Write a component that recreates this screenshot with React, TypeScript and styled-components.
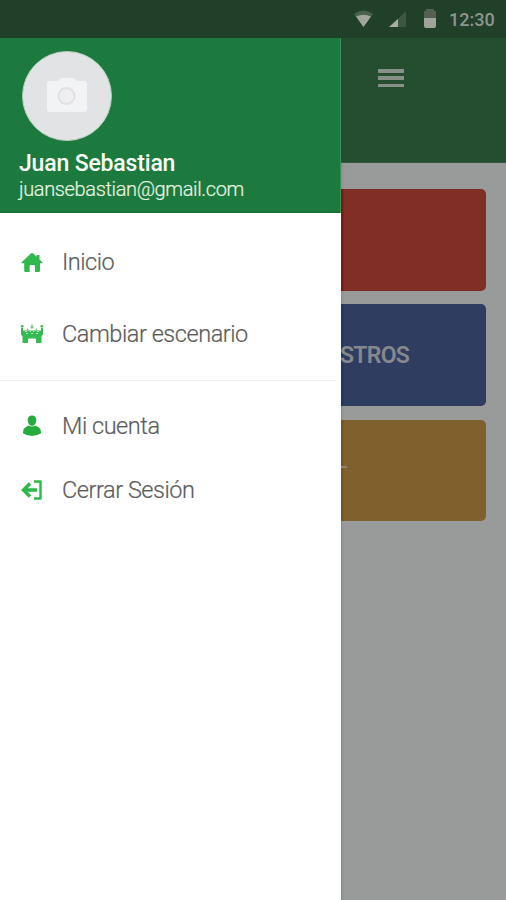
import React from "react";
import styled, { createGlobalStyle } from "styled-components";

const GlobalStyle = createGlobalStyle`
  * { box-sizing: border-box; }
  body { margin: 0; font-family: Roboto, "Liberation Sans", sans-serif; }
`;

const Screen = styled.div`
  width: 506px;
  height: 900px;
  display: flex;
  flex-direction: column;
  overflow: hidden;
  background: #989b99;
`;

const StatusBar = styled.header`
  height: 38px;
  flex: none;
  display: flex;
  align-items: center;
  justify-content: flex-end;
  padding-right: 11px;
  background: #204029;
`;

const StatusIcons = styled.svg`
  width: 90px;
  height: 22px;
  margin-right: 7px;
`;

const Clock = styled.time`
  width: 46px;
  font-size: 18px;
  line-height: 22px;
  font-weight: 500;
  letter-spacing: 0;
  padding-top: 1px;
  white-space: nowrap;
  color: #8f9690;
`;

const Body = styled.div`
  flex: 1;
  display: flex;
  min-height: 0;
`;

const Drawer = styled.aside`
  width: 341px;
  flex: none;
  background: #fff;
`;

const Profile = styled.section`
  height: 175px;
  padding: 13px 19px 0;
  background: linear-gradient(#1d7a3e 172px, #127032);
  border-right: 1px solid #3c9259;
`;

const Avatar = styled.div`
  width: 90px;
  height: 90px;
  margin-left: 3px;
  display: flex;
  align-items: center;
  justify-content: center;
  border-radius: 50%;
  background: #e2e3e5;
  border: 1px solid #b5cfbd;
`;

const Name = styled.div`
  margin-top: 9px;
  font-size: 23px;
  line-height: 27px;
  font-weight: 500;
  letter-spacing: -0.17px;
  white-space: nowrap;
  color: #fbfff8;
`;

const Email = styled.div`
  font-size: 20px;
  line-height: 25px;
  font-weight: 300;
  letter-spacing: -0.36px;
  white-space: nowrap;
  color: #e6f4e0;
  -webkit-text-stroke: 0.2px #e6f4e0;
`;

const Menu = styled.nav`
  padding-top: 13px;
`;

const MenuItem = styled.a<{ $height: number }>`
  height: ${(p) => p.$height}px;
  display: flex;
  align-items: center;
  gap: 18px;
  padding-left: 20px;
  font-size: 23.5px;
  font-weight: 300;
  color: #5c5c5c;
  -webkit-text-stroke: 0.2px #5c5c5c;
  white-space: nowrap;

  svg { width: 24px; height: 24px; flex: none; }
`;

const Label = styled.span`
  letter-spacing: -0.45px;
`;

const Divider = styled.hr`
  height: 1px;
  margin: 10px 5px 13px 0;
  border: 0;
  background: #f0f0f0;
`;

const Page = styled.main`
  flex: 1;
  min-width: 0;
  border-left: 1px solid #8a8d8b;
  background: linear-gradient(90deg, #929593, #989b99 3px);
`;

const AppBar = styled.div`
  height: 125px;
  margin-left: -1px;
  padding: 31px 0 0 37px;
  background: #244e2f;
  border-bottom: 1px solid #345b3e;
`;

const MenuButton = styled.button`
  width: 26px;
  height: 18px;
  display: flex;
  flex-direction: column;
  justify-content: space-between;
  padding: 0;
  border: 0;
  background: none;
`;

const Bar = styled.span`
  height: 3.5px;
  background: #868f88;
`;

const Cards = styled.div`
  display: grid;
  grid-template-rows: repeat(3, 102px);
  row-gap: 13px;
  margin-left: -1px;
  padding: 26px 20px 0 0;
`;

const Card = styled.div<{ $color: string; $edge: string }>`
  display: flex;
  align-items: center;
  overflow: hidden;
  border-radius: 0 5px 5px 0;
  background: linear-gradient(90deg, ${(p) => p.$edge} 2px, ${(p) => p.$color} 3px);

  &:last-child { margin-top: 1px; }
`;

const CardText = styled.span`
  margin-left: -1px;
  font-size: 23px;
  font-weight: 600;
  letter-spacing: -0.7px;
  color: #85888d;
`;

const CardMark = styled.span`
  width: 6px;
  height: 1.5px;
  margin-top: -7px;
  background: #91856e;
`;

const CameraIcon = () => (
  <svg width="40" height="37" viewBox="0 0 40 37">
    <path d="M3 3h8l4-4h11l4 4h7q3 0 3 3v25q0 3-3 3H3q-3 0-3-3V6q0-3 3-3z" fill="#f2f3f4" />
    <circle cx="19.500" cy="18" r="8" fill="#efeff1" stroke="#dfe0e2" strokeWidth="2" />
  </svg>
);

const HomeIcon = () => (
  <svg viewBox="0 0 24 24" fill="#31b84e">
    <path d="M10.500 3.800q1.500-1.400 3 0l3.200 3V5h2.800v4.400l2.900 2.900q.7.900-.7 1H20v7.400q0 1.200-1.200 1.200h-3.900v-5.500q0-1.300-1.200-1.300h-2.900q-1.200 0-1.200 1.300v5.500H5.500q-1.300 0-1.300-1.200v-7.400H2.100q-1.100-.2-.4-1z" />
  </svg>
);

const CastleIcon = () => (
  <svg viewBox="0 0 24 24">
    <path d="M1 6h2v2.500h18V6h2v6.500l-1.500 2V21H16v-3.500q0-1-1-1H9q-1 0-1 1V21H2.500v-6.500L1 12.500z" fill="#35ba53" />
    <circle cx="2.200" cy="4.300" r="1.400" fill="#45bc5d" />
    <circle cx="21.800" cy="4.300" r="1.400" fill="#45bc5d" />
    <path d="M12 2.500v4M10.500 5.500h3M7.500 6.500v2M16.500 6.500v2" stroke="#78c585" strokeWidth="1.500" />
    <path d="M5 9.500h2m3 0h1m2 0h1m3 0h2M6 11.500h2m3 0h2m3 0h2" stroke="#b4e3bd" strokeWidth="1.200" />
  </svg>
);

const UserIcon = () => (
  <svg viewBox="0 0 24 24" fill="#26ac3d">
    <path d="M12 1.500c3 0 4.500 2 4.300 5-.2 3-1.700 5.300-4.300 5.300S7.900 9.500 7.700 6.500C7.500 3.500 9 1.500 12 1.500z" />
    <path d="M8.500 11.500q3.500 2 7 0l3 1.700Q21 14.500 21 18v1.300Q17 22 12 22T3 19.300V18q0-3.500 2.500-4.800z" />
  </svg>
);

const LogoutIcon = () => (
  <svg viewBox="0 0 24 24" fill="none" stroke="#2eb849">
    <path d="M10 5.500 3.500 12l6.500 6.500M3.500 12H17" strokeWidth="3.500" />
    <path d="M14 3.500h6.500v17H14" strokeWidth="2.400" strokeLinejoin="round" />
  </svg>
);

const PhoneStatus = () => (
  <StatusIcons viewBox="352 7 90 22">
    <path d="M354 13q9.500-7 19 0l-9.500 13z" fill="#49614f" />
    <path d="M356 15.500q7.500-3.500 15 0l-7.500 10.500z" fill="#a0a69e" />
    <path d="M406 10v16h-17z" fill="#3d5543" />
    <path d="M398 18v8h-9z" fill="#aaada4" />
    <path d="M426 10V8h8v2h2v8h-12v-8z" fill="#526153" />
    <path d="M424 17h12v8q0 2-2 2h-8q-2 0-2-2z" fill="#a0a49b" />
  </StatusIcons>
);

export default function App() {
  return (
    <Screen>
      <GlobalStyle />
      <StatusBar>
        <PhoneStatus />
        <Clock>12:30</Clock>
      </StatusBar>
      <Body>
        <Drawer>
          <Profile>
            <Avatar><CameraIcon /></Avatar>
            <Name>Juan Sebastian</Name>
            <Email>juansebastian@gmail.com</Email>
          </Profile>
          <Menu>
            <MenuItem $height={72}><HomeIcon /><Label>Inicio</Label></MenuItem>
            <MenuItem $height={72}><CastleIcon /><Label>Cambiar escenario</Label></MenuItem>
            <Divider />
            <MenuItem $height={64}><UserIcon /><Label>Mi cuenta</Label></MenuItem>
            <MenuItem $height={64}><LogoutIcon /><Label>Cerrar Sesión</Label></MenuItem>
          </Menu>
        </Drawer>
        <Page>
          <AppBar>
            <MenuButton aria-label="Menu"><Bar /><Bar /><Bar /></MenuButton>
          </AppBar>
          <Cards>
            <Card $color="#812f26" $edge="#791a18" />
            <Card $color="#2f3e60" $edge="#213760"><CardText>STROS</CardText></Card>
            <Card $color="#80602d" $edge="#795321"><CardMark /></Card>
          </Cards>
        </Page>
      </Body>
    </Screen>
  );
}
